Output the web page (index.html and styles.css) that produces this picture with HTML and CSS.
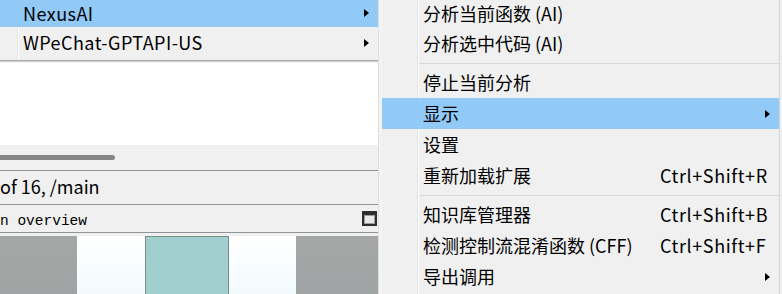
FILE: index.html
```html
<!DOCTYPE html>
<html lang="zh-CN">
<head>
    <meta charset="UTF-8">
    <meta name="viewport" content="width=device-width, initial-scale=1.0">
    <title>NexusAI Menu</title>
    <link rel="stylesheet" href="styles.css">
</head>
<body>
    <div class="screen">
        <div class="left">
            <div class="menu menu-a">
                <div class="item active"><span class="label">NexusAI</span><span class="arrow"></span></div>
                <div class="item"><span class="label">WPeChat-GPTAPI-US</span><span class="arrow"></span></div>
            </div>
            <div class="menu-shadow"></div>
            <div class="graph"></div>
            <div class="hscroll"><div class="thumb"></div></div>
            <div class="status">of 16, /main</div>
            <div class="overview-head">
                <span class="mono">n overview</span>
                <span class="win-icon"></span>
            </div>
            <div class="overview">
                <div class="blk grey"></div>
                <div class="blk light"></div>
                <div class="blk teal"></div>
                <div class="blk light"></div>
                <div class="blk grey"></div>
            </div>
        </div>
        <div class="edge"></div>
        <div class="menu menu-b">
            <div class="item"><span class="label">分析当前函数 (AI)</span></div>
            <div class="item"><span class="label">分析选中代码 (AI)</span></div>
            <div class="sep"></div>
            <div class="item"><span class="label">停止当前分析</span></div>
            <div class="item active"><span class="label">显示</span><span class="arrow"></span></div>
            <div class="item"><span class="label">设置</span></div>
            <div class="item"><span class="label">重新加载扩展</span><span class="key">Ctrl+Shift+R</span></div>
            <div class="sep"></div>
            <div class="item"><span class="label">知识库管理器</span><span class="key">Ctrl+Shift+B</span></div>
            <div class="item"><span class="label">检测控制流混淆函数 (CFF)</span><span class="key">Ctrl+Shift+F</span></div>
            <div class="item"><span class="label">导出调用</span><span class="arrow"></span></div>
        </div>
    </div>
</body>
</html>
```

FILE: styles.css
```css
body {
    margin: 0;
    width: 782px;
    height: 294px;
    overflow: hidden;
    background-color: #f0f0f0;
    font-family: "Noto Sans CJK SC", "Noto Sans", sans-serif;
    font-size: 18px;
    color: #000;
}
.screen {
    display: flex;
    height: 294px;
}
.left {
    width: 378px;
    display: flex;
    flex-direction: column;
}
.menu {
    background-color: #f0f0f0;
}
.item {
    display: grid;
    grid-template-columns: 1fr 119px;
    align-items: center;
    box-sizing: border-box;
    height: 31px;
    line-height: 31px;
    white-space: nowrap;
}
.item.active {
    background-color: #91c9f7;
}
.label {
    grid-column: 1;
}
.key {
    grid-column: 2;
    letter-spacing: 0.6px;
}
.arrow {
    grid-column: 2;
    justify-self: end;
    width: 0;
    height: 0;
    margin-right: 9px;
    border-left: 5px solid #000;
    border-top: 4.5px solid transparent;
    border-bottom: 4.5px solid transparent;
}

/* first menu, cut off at the left and top */
.menu-a {
    padding-bottom: 2px;
    border-bottom: 1px solid #a8a8a8;
    background-image: linear-gradient(to right, transparent 17px, #e2e3e3 17px, #e2e3e3 18px, #fff 18px, #fff 19px, transparent 19px);
}
.menu-a .item {
    grid-template-columns: 1fr 30px;
    padding-left: 23px;
    letter-spacing: 0.45px;
}
.menu-a .item:first-child {
    height: 27px;
    line-height: 26px;
    padding-bottom: 1px;
}
.menu-shadow {
    height: 2px;
    background: linear-gradient(#c4c4c4, #fff);
}
.graph {
    height: 82px;
    background-color: #fff;
}
.hscroll {
    height: 25px;
    background-color: #f0f0f0;
}
.thumb {
    width: 115px;
    height: 5px;
    margin-top: 10px;
    background-color: #878787;
    border-radius: 0 3px 3px 0;
}
.status {
    box-sizing: border-box;
    height: 34px;
    padding-bottom: 3px;
    line-height: 30px;
    border-top: 1px solid #8d9398;
    white-space: nowrap;
}
.overview-head {
    height: 27px;
    display: flex;
    align-items: center;
    justify-content: space-between;
    border-top: 1px solid #8d9398;
    border-bottom: 1px solid #8d9398;
    margin-bottom: 3px;
}
.mono {
    font-family: "Liberation Mono", monospace;
    font-size: 14.5px;
    margin-top: 4px;
}
.win-icon {
    box-sizing: border-box;
    width: 15px;
    height: 15px;
    margin-right: 1px;
    border: 2px solid #2e2e2e;
    border-top-width: 4px;
    background-color: #e8e8e8;
    box-shadow: inset 0 0 0 1px #9c9c9c;
}
.overview {
    height: 58px;
    display: grid;
    grid-template-columns: 77px 68px 84px 67px 82px;
}
.blk.grey {
    background: linear-gradient(#a5a7a7, #a0a3a3);
}
.blk.light {
    background: linear-gradient(#fff, #f2fafd);
}
.blk.teal {
    background-color: #a1cfcf;
    border: 1px solid #7c8a8a;
    border-bottom: none;
}
.edge {
    width: 4px;
    background-color: #f3f3f3;
    border-left: 1px solid #dedede;
    box-sizing: border-box;
}

/* second menu, cut off at the top */
.menu-b {
    width: 397px;
    border-right: 1px solid #d3d3d3;
    background-image: linear-gradient(to right, transparent 35px, #e2e3e3 35px, #e2e3e3 36px, #fff 36px, #fff 37px, transparent 37px);
}
.menu-b .item {
    padding-left: 41px;
}
.menu-b .item:first-child {
    height: 28px;
    line-height: 26px;
    padding-bottom: 2px;
}
.sep {
    height: 1px;
    margin: 4px 0 3px 37px;
    background-color: #d7d7d7;
}
```
